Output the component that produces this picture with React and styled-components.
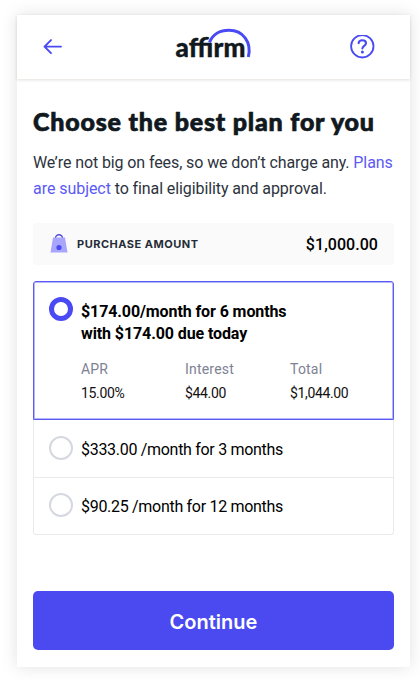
import React, { useState } from 'react';
import styled, { createGlobalStyle } from 'styled-components';

const GlobalStyle = createGlobalStyle`
  * {
    box-sizing: border-box;
  }

  body {
    margin: 0;
    background: #fff;
    color: #101820;
    font-family: Roboto, 'Liberation Sans', sans-serif;
  }
`;

const Card = styled.main`
  width: 393px;
  height: 652px;
  margin: 15px 10px 14px 17px;
  background: #fff;
  box-shadow: 0 0 16px rgba(0, 0, 0, 0.12);
`;

const Header = styled.header`
  height: 64px;
  padding: 0 35px 0 26px;
  display: grid;
  grid-template-columns: 20px 1fr 25px;
  align-items: center;
  box-shadow: 0 1px 3px rgba(60, 30, 10, 0.14);
`;

const IconButton = styled.button`
  display: flex;
  padding: 0;
  border: 0;
  background: none;
  color: #4a4af4;
`;

const Logo = styled.svg`
  display: block;
  width: 80px;
  height: 36px;
  margin-left: 109px;
  overflow: visible;
`;

const LogoText = styled.text`
  font-family: Lato, sans-serif;
  font-weight: 900;
  font-size: 26px;
  fill: #101820;
  stroke: #101820;
  stroke-width: 0.4px;
`;

const Content = styled.div`
  padding: 27px 16px 0;
`;

const Title = styled.h1`
  margin: 0;
  font-family: Lato, sans-serif;
  font-weight: 900;
  font-size: 25px;
  line-height: 30px;
  letter-spacing: 0.8px;
  white-space: nowrap;
  -webkit-text-stroke: 0.7px #101820;
`;

const Intro = styled.p`
  margin: 14px 0 0;
  font-size: 16px;
  line-height: 26px;
  letter-spacing: -0.1px;
  color: #2c333d;
  white-space: nowrap;

  & > span:last-of-type {
    letter-spacing: -0.05px;
  }
`;

const Link = styled.span`
  color: #5c5af5;
`;

const Purchase = styled.div`
  height: 42px;
  margin-top: 21px;
  padding: 0 16px 0 17px;
  display: flex;
  align-items: center;
  border-radius: 3px;
  background: #fafafa;
`;

const PurchaseLabel = styled.span`
  margin-left: 9px;
  font-family: Inter, sans-serif;
  font-size: 11px;
  font-weight: 700;
  letter-spacing: 0.5px;
  color: #252c37;
`;

const PurchaseAmount = styled.span`
  margin-left: auto;
  font-size: 16px;
  font-weight: 500;
  letter-spacing: 0.05px;
  color: #000;
`;

const Plans = styled.div`
  width: 361px;
  margin-top: 16px;
`;

const Plan = styled.div`
  height: ${props => props.$height}px;
  padding: 0 15px 2px;
  display: grid;
  grid-template-columns: 24px 1fr;
  column-gap: 8px;
  align-content: ${props => (props.$selected ? 'start' : 'center')};
  align-items: ${props => (props.$selected ? 'start' : 'center')};
  border: 1px solid #e9eaec;
  border-top-width: 0;
  cursor: pointer;

  &:last-child {
    border-radius: 0 0 3px 3px;
  }

  ${props => props.$selected && `
    padding-top: 15px;
    border: 1px solid #5b5af4;
    border-radius: 3px 3px 0 0;
    box-shadow: inset 0 0 0 1px rgba(91, 90, 244, 0.45);
  `}
`;

const Radio = styled.span`
  width: 24px;
  height: 24px;
  border: ${props => (props.$selected ? '5px solid #4a4af4' : '2px solid #d5d8e0')};
  border-radius: 50%;
`;

const PlanName = styled.div`
  padding-top: ${props => (props.$selected ? 4 : 2)}px;
  font-size: 16px;
  font-weight: ${props => (props.$selected ? 700 : 400)};
  line-height: 22px;
  letter-spacing: ${props => (props.$selected ? -0.1 : -0.3)}px;
  color: #000;
  white-space: nowrap;
`;

const PlanLine = styled.div`
  ${props => !props.$selected && `
    margin: 1px 0 -1px;
  `}
`;

const Details = styled.dl`
  grid-column: 2;
  margin: 12px 0 0;
  display: grid;
  grid-template-columns: 104px 105px 1fr;
`;

const DetailLabel = styled.dt`
  font-size: 14px;
  line-height: 24px;
  letter-spacing: 0.2px;
  color: #7d8294;
`;

const DetailValue = styled.dd`
  margin: 0;
  font-size: 14px;
  line-height: 24px;
  letter-spacing: -0.35px;
  color: #111;
`;

const ContinueButton = styled.button`
  display: block;
  width: 361px;
  height: 59px;
  margin-top: 56px;
  padding: 3px 0 0;
  border: 0;
  border-radius: 5px;
  background: #4a4af0;
  color: #fff;
  font-family: Inter, sans-serif;
  font-size: 20px;
  font-weight: 600;
`;

const plans = [
  {
    name: ['$174.00/month for 6 months', 'with $174.00 due today'],
    height: 139,
    details: [
      ['APR', '15.00%'],
      ['Interest', '$44.00'],
      ['Total', '$1,044.00']
    ]
  },
  { name: ['$333.00 /month for 3 months'], height: 58 },
  { name: ['$90.25 /month for 12 months'], height: 57 }
];

function App() {
  const [selected, setSelected] = useState(0);

  return (
    <>
      <GlobalStyle />
      <Card>
        <Header>
          <IconButton aria-label="Back">
            <svg width="20" height="16" viewBox="0 0 20 16" fill="none" stroke="currentColor" strokeWidth="1.9" strokeLinecap="round" strokeLinejoin="round">
              <path d="M18 7.6H1.8M8 1.1L1.5 7.6L8 14.1" />
            </svg>
          </IconButton>
          <Logo viewBox="0 0 80 36">
            <LogoText x="3.5" y="28" textLength="70">affirm</LogoText>
            <path d="M38 13C41 6 48 1.3 57 1.3C71 1.3 80 13 76.3 28" fill="none" stroke="#fff" strokeWidth="5" />
            <path d="M37.5 13.5C40.5 5.5 48 1.3 57 1.3C71 1.3 80 13 76.3 28" fill="none" stroke="#4a4af4" strokeWidth="3" />
          </Logo>
          <IconButton aria-label="Help">
            <svg width="25" height="25" viewBox="0 0 25 25" fill="none" stroke="currentColor" strokeWidth="1.8" strokeLinecap="round">
              <circle cx="12.3" cy="11.3" r="11.2" />
              <path d="M8.6 8.2C8.8 6.2 10.4 5.2 12.3 5.2C14.5 5.2 16 6.4 16 8.3C16 10.8 12.4 10.8 12.4 13.4" strokeWidth="2.1" />
              <circle cx="12.4" cy="17.1" r="1.5" fill="currentColor" stroke="none" />
            </svg>
          </IconButton>
        </Header>
        <Content>
          <Title>Choose the best plan for you</Title>
          <Intro>
            We’re not big on fees, so we don’t charge any. <Link>Plans</Link>
            <br />
            <Link>are subject</Link> to final eligibility and approval.
          </Intro>
          <Purchase>
            <svg width="18" height="20" viewBox="0 0 18 20">
              <path d="M5.5 4.5V4A3.5 3.3 0 0 1 12.5 4V4.5" fill="none" stroke="#4a4ad6" strokeWidth="1.4" />
              <path d="M3 3.5H15L17.5 18.5H0.5Z" fill="#a7a6fc" />
              <circle cx="9" cy="13.5" r="2.6" fill="#4a4af0" />
            </svg>
            <PurchaseLabel>PURCHASE AMOUNT</PurchaseLabel>
            <PurchaseAmount>$1,000.00</PurchaseAmount>
          </Purchase>
          <Plans>
            {plans.map((plan, index) => (
              <Plan
                key={plan.name[0]}
                $height={plan.height}
                $selected={selected === index}
                onClick={() => setSelected(index)}
              >
                <Radio $selected={selected === index} />
                <PlanName $selected={selected === index}>
                  {plan.name.map(line => (
                    <PlanLine key={line} $selected={selected === index}>{line}</PlanLine>
                  ))}
                </PlanName>
                {plan.details && (
                  <Details>
                    {plan.details.map(([label, value]) => (
                      <div key={label}>
                        <DetailLabel>{label}</DetailLabel>
                        <DetailValue>{value}</DetailValue>
                      </div>
                    ))}
                  </Details>
                )}
              </Plan>
            ))}
          </Plans>
          <ContinueButton>Continue</ContinueButton>
        </Content>
      </Card>
    </>
  );
}

export default App;
